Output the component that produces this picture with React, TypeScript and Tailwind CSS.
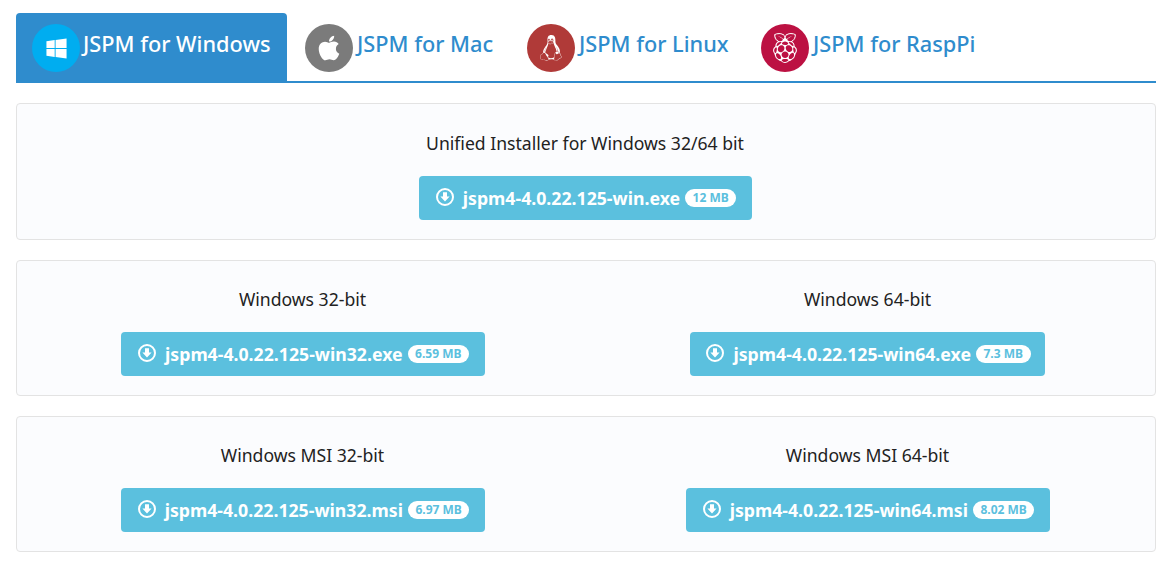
import { FaApple, FaLinux, FaRaspberryPi, FaWindows } from "react-icons/fa";
import type { ReactNode } from "react";

// ring with a bold arrow, like the old glyphicon-download
const DownloadIcon = () => {
    return (
        <svg viewBox="0 0 18 18" className="w-[18px] h-[18px] mb-[2px] mr-[9px] shrink-0" fill="none">
            <circle cx="9" cy="9" r="8" stroke="white" strokeWidth="2" />
            <path d="M7 4.2h4v4.4h2.6L9 13.4 4.4 8.6H7z" fill="white" />
        </svg>
    );
};

const Tab = ({ active, icon, bg, label, width }: { active?: boolean; icon: ReactNode; bg: string; label: string; width: string }) => {
    return (
        <div className={`flex items-start pt-[11px] rounded-t-[4px] ${width} ${active ? "pl-[16px] bg-[#2f8ccd] text-white h-[70px]" : "pl-[18px] text-[#2f8ccd] h-[68px]"}`}>
            <span className={`flex items-center justify-center w-[48px] h-[48px] rounded-full text-white text-[23px] shrink-0 ${bg}`}>{icon}</span>
            <span className={`text-[21.75px] font-medium leading-[40px] whitespace-nowrap ${active ? "ml-[3px]" : "ml-[4px]"}`}>{label}</span>
        </div>
    );
};

const Download = ({ title, file, size, width }: { title: string; file: string; size: string; width: string }) => {
    return (
        <div className="flex flex-col items-center">
            <h3 className="text-[#222222] text-[17.6px] font-[450] leading-[24px] h-[24px]">{title}</h3>
            <a className={`mt-[21px] pl-[2px] flex items-center justify-center h-[44px] rounded-[4px] bg-[#5bc0de] text-white ${width}`}>
                <DownloadIcon />
                <span className="text-[17.7px] font-bold">{file}</span>
                <span className="ml-[5px] bg-white text-[#5bc0de] rounded-full px-[7.5px] h-[18px] text-[12px] leading-[18px] font-bold">{size}</span>
            </a>
        </div>
    );
};

const App = () => {
    return (
        <div className="w-[1173px] h-[567px] bg-white pl-[16px] pr-[17px] pt-[13px] overflow-hidden font-['Noto_Sans','Open_Sans',sans-serif]">
            <div className="flex items-start h-[70px] border-b-2 border-[#2f8ccd]">
                <Tab active width="w-[271px]" bg="bg-[#00adf0]" icon={<FaWindows />} label="JSPM for Windows" />
                <Tab width="w-[222px]" bg="bg-[#7b7b7b]" icon={<FaApple className="text-[28px]" />} label="JSPM for Mac" />
                <Tab width="w-[234px]" bg="bg-[#b03a38]" icon={<FaLinux className="text-[26px]" />} label="JSPM for Linux" />
                <Tab width="w-[240px]" bg="bg-[#bc1142]" icon={<FaRaspberryPi className="text-[30px]" />} label="JSPM for RaspPi" />
            </div>
            <div className="mt-[20px] flex flex-col gap-[20px]">
                <div className="h-[137px] pt-[27px] pr-[2px] rounded-[4px] border border-[#e3e3e3] bg-[#fbfcfe]">
                    <Download title="Unified Installer for Windows 32/64 bit" file="jspm4-4.0.22.125-win.exe" size="12 MB" width="w-[333px]" />
                </div>
                <div className="h-[136px] pt-[26px] pl-[3px] pr-[5px] rounded-[4px] border border-[#e3e3e3] bg-[#fbfcfe] grid grid-cols-2">
                    <Download title="Windows 32-bit" file="jspm4-4.0.22.125-win32.exe" size="6.59 MB" width="w-[364px]" />
                    <Download title="Windows 64-bit" file="jspm4-4.0.22.125-win64.exe" size="7.3 MB" width="w-[355px]" />
                </div>
                <div className="h-[136px] pt-[26px] pl-[3px] pr-[5px] rounded-[4px] border border-[#e3e3e3] bg-[#fbfcfe] grid grid-cols-2">
                    <Download title="Windows MSI 32-bit" file="jspm4-4.0.22.125-win32.msi" size="6.97 MB" width="w-[364px]" />
                    <Download title="Windows MSI 64-bit" file="jspm4-4.0.22.125-win64.msi" size="8.02 MB" width="w-[364px]" />
                </div>
            </div>
        </div>
    );
};

export default App;
